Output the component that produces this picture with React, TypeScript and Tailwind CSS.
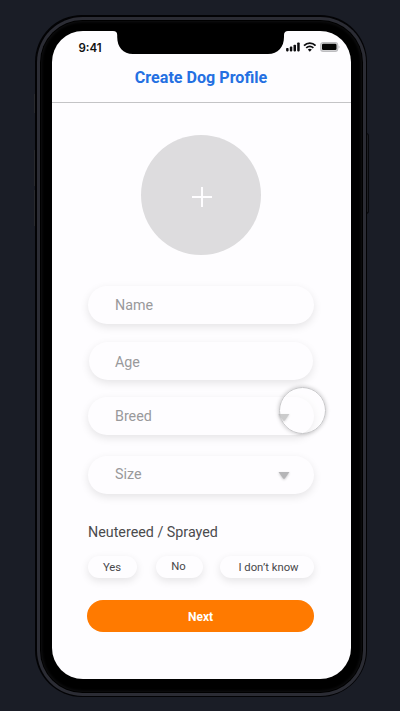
import React from "react";

const shadow = "shadow-[0_3px_8px_rgba(0,0,0,0.10)]";

function StatusIcons() {
  return (
    <svg width="54" height="12" viewBox="0 0 54 12" className="block">
      <g fill="#0c0c0e">
        <rect x="0.1" y="7" width="2.5" height="3.4" rx="0.8" />
        <rect x="3.8" y="5.6" width="2.5" height="4.8" rx="0.8" />
        <rect x="7.5" y="3.7" width="2.5" height="6.7" rx="0.8" />
        <rect x="11.2" y="1.5" width="2.5" height="8.9" rx="0.8" />
      </g>
      <g fill="none" stroke="#0c0c0e" strokeWidth="1.8">
        <path d="M18 4.6C21.4 1.3 26.2 1.3 29.6 4.6" />
        <path d="M20.2 6.9C22.4 5 25.2 5 27.4 6.9" />
      </g>
      <path d="M21.8 8.5Q23.8 7 25.8 8.5L23.8 10.7Z" fill="#0c0c0e" />
      <rect x="34.7" y="1.5" width="17" height="8.9" rx="2.6" fill="#d8d8da" stroke="#bdbdc0" strokeWidth="1.2" />
      <rect x="36" y="2.8" width="14.5" height="6.3" rx="1.3" fill="#050505" />
      <path d="M52.7 4.4Q54.2 5.9 52.7 7.4Z" fill="#aaa" />
    </svg>
  );
}

function Caret() {
  return (
    <svg width="12" height="9" viewBox="0 0 12 9" className="ml-auto mr-[24px] mt-[2px] block overflow-visible drop-shadow-[0_1px_1px_rgba(0,0,0,0.2)]">
      <path d="M0.5 1H11.5L6.8 7.4Q6 8.3 5.2 7.4Z" fill="#b5b5b7" />
    </svg>
  );
}

function Field({ label, className, caret }: { label: string; className: string; caret?: boolean }) {
  return (
    <div className={`flex shrink-0 items-center rounded-full bg-[#fefdff] text-[14.3px] leading-none text-[#99999b] ${shadow} ${className}`}>
      <span>{label}</span>
      {caret && <Caret />}
    </div>
  );
}

export default function App() {
  return (
    <div className="relative flex h-[711px] w-[400px] overflow-hidden bg-[#1a1d26] pl-[35px] pt-[15px] font-['Roboto',sans-serif]">
      {/* side buttons */}
      <div className="absolute left-[34px] top-[94px] h-[19px] w-[2px] bg-[#292a2e]" />
      <div className="absolute left-[34px] top-[150px] h-[36px] w-[2px] bg-[#292a2e]" />
      <div className="absolute left-[34px] top-[190px] h-[36px] w-[2px] bg-[#292a2e]" />
      <div className="absolute left-[366px] top-[133px] h-[81px] w-[3px] rounded-r-sm border border-[#08090c] bg-[#1d1e23]" />

      {/* phone body */}
      <div className="relative h-[682px] w-[332px] rounded-[47px] bg-[#030305] p-[1.5px]">
        <div className="h-full w-full rounded-[45.5px] bg-[#2b2c34] p-[3px]">
          <div className="h-full w-full rounded-[42.5px] bg-black p-[1px]">
            <div className="h-full w-full rounded-[41.5px] bg-black pb-[12.5px] pl-[11.5px] pr-[10.5px] pt-[10.5px] shadow-[inset_0_0_3px_1px_#101012]">
              <div className="relative flex h-[648px] w-[299px] flex-col overflow-hidden rounded-[31px] bg-[#fefdff]">
                <svg className="absolute left-[61px] top-0" width="176" height="24" viewBox="0 0 176 24">
                  <path d="M0 0C3 0 4.2 1.2 4.2 4V6C4.2 16 10 23 20 23H155C165 23 171 16 171 6V4C171 1.2 172.5 0 175 0Z" fill="#000" />
                </svg>

                <header className="h-[72px] shrink-0 border-b border-[#c4c4c6]">
                  <div className="flex h-[34px] justify-between pl-[26.5px] pr-[11px]">
                    <span className="pt-[11px] font-['Inter'] text-[11.5px] font-semibold leading-[13px] text-[#111]">9:41</span>
                    <div className="pt-[10px]"><StatusIcons /></div>
                  </div>
                  <h1 className="pr-[1px] text-center text-[16.1px] font-bold leading-[26px] text-[#2470e2]">Create Dog Profile</h1>
                </header>

                <main className="flex flex-col pl-[36px]">
                  <button className="ml-[53px] mt-[31.5px] flex h-[120px] w-[120px] shrink-0 items-center justify-center rounded-full bg-[#dddcde]">
                    <svg width="20" height="20" viewBox="0 0 20 20" className="ml-[1px] mt-[5px]">
                      <path d="M10 0V20M0 10H20" stroke="#fefdff" strokeWidth="2" />
                    </svg>
                  </button>
                  <Field label="Name" className="mt-[31.5px] h-[38px] w-[226px] pl-[27px] pt-[1px]" />
                  <Field label="Age" className="ml-[1px] mt-[18px] h-[38px] w-[224px] pl-[26px] pt-[2px]" />
                  <Field label="Breed" caret className="mt-[17px] h-[38px] w-[226px] pl-[27px]" />
                  <Field label="Size" caret className="mt-[20.5px] h-[38px] w-[226px] pl-[27px]" />
                  <p className="mt-[29.5px] text-[14.3px] leading-[18px] text-[#4b4b4d]">Neutereed / Sprayed</p>
                  <div className="mt-[15px] flex h-[22px] text-[11.3px] text-[#48484a]">
                    <button className={`w-[49px] rounded-full bg-[#fefdff] pr-[1px] pt-[2px] leading-[20px] ${shadow}`}>Yes</button>
                    <button className={`ml-[19px] w-[47px] rounded-full bg-[#fefdff] pr-[2px] leading-[22px] ${shadow}`}>No</button>
                    <button className={`ml-[17px] w-[94px] rounded-full bg-[#fefdff] pl-[3px] pt-[2px] leading-[20px] ${shadow}`}>I don’t know</button>
                  </div>
                  <button className="-ml-[1px] mt-[22px] h-[32px] w-[227px] rounded-full bg-[#ff7a00] pt-[2px] text-[12px] font-bold leading-[30px] text-white">Next</button>
                </main>
              </div>
            </div>
          </div>
        </div>
      </div>

      {/* touch indicator */}
      <div className="absolute left-[279px] top-[387px] h-[47px] w-[47px] rounded-full border-[1.5px] border-[#c6c6c8] bg-white/30 shadow-[0_0_4px_rgba(0,0,0,0.25)]" />
    </div>
  );
}
